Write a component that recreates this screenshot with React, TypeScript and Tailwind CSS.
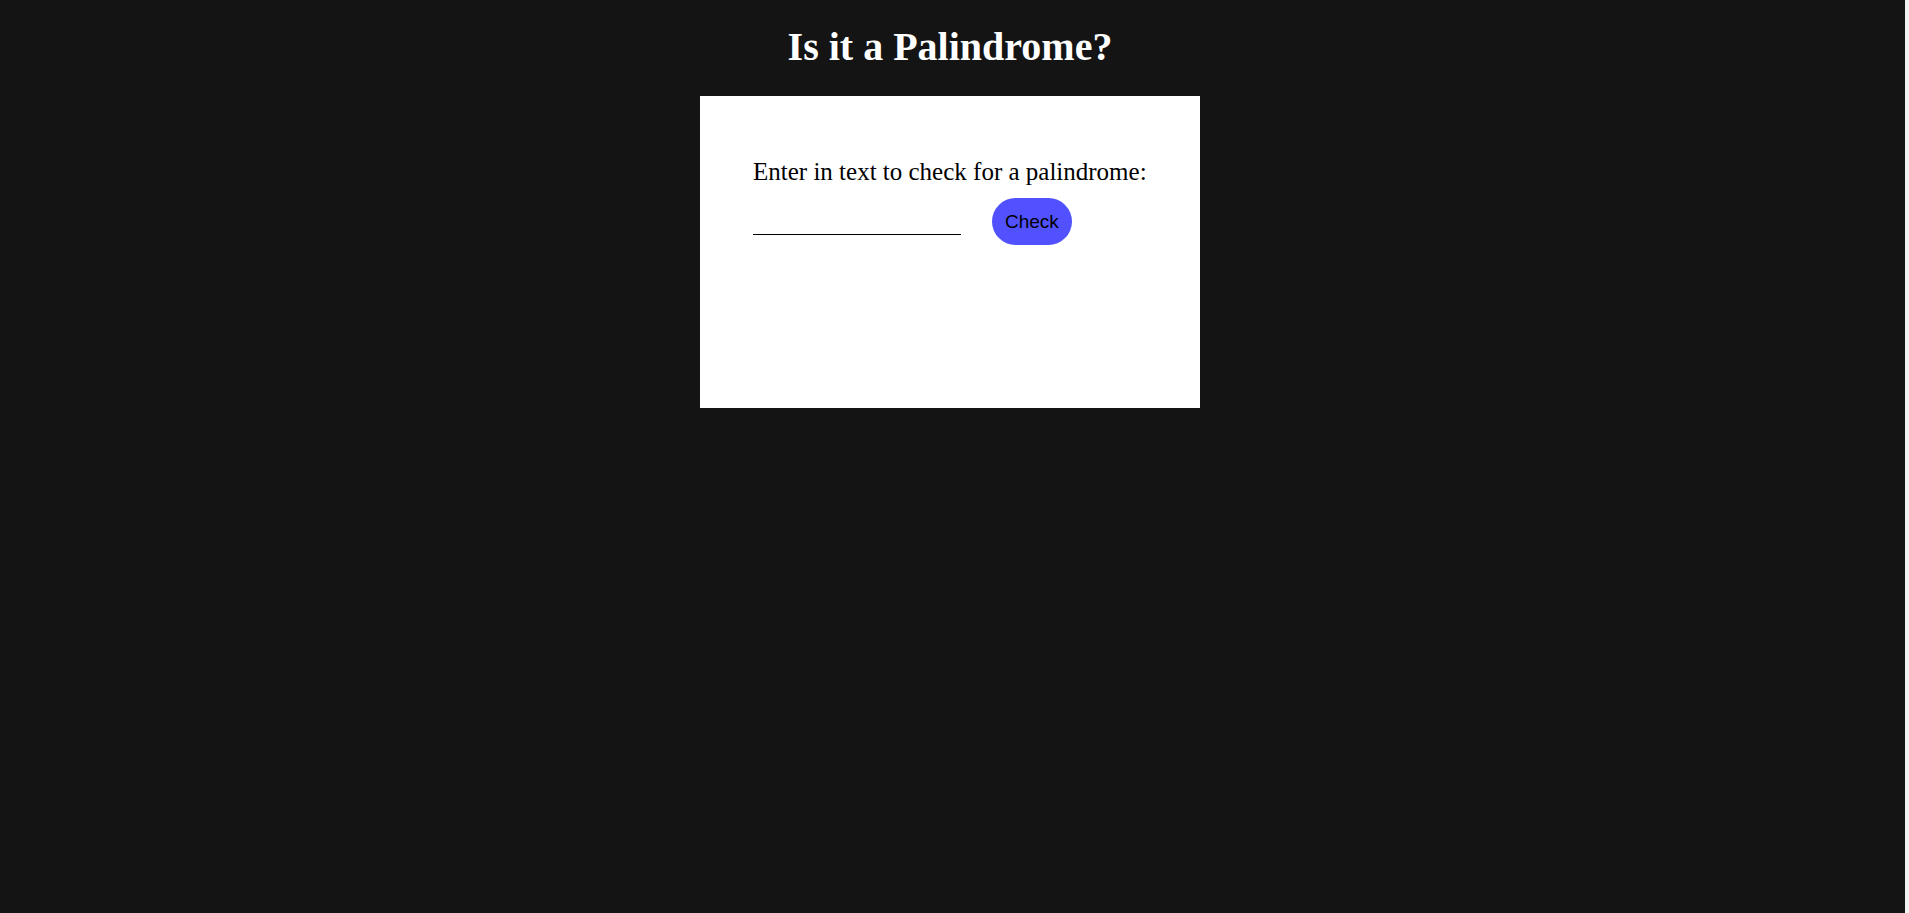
import React, { useState } from 'react';

const App: React.FC = () => {
  const [text, setText] = useState('');

  return (
    <div className="flex min-h-screen">
      <div className="flex-1 bg-[#141414] flex flex-col items-center pt-[24px] pr-[5px]">
        <h1 className="text-white font-bold text-[40px] leading-[46px] font-['Liberation_Serif',serif]">
          Is it a Palindrome?
        </h1>

        {/* Checker card */}
        <div className="mt-[26px] w-[500px] h-[312px] bg-white pl-[53px] pt-[61px]">
          <label className="block text-black text-[25px] leading-[29px] font-['Liberation_Serif',serif]">
            Enter in text to check for a palindrome:
          </label>
          <div className="flex items-center mt-[12px]">
            <input
              value={text}
              onChange={(e) => setText(e.target.value)}
              className="w-[208px] h-[27px] border-b border-black outline-none bg-transparent text-[18px] font-['Liberation_Serif',serif]"
            />
            <button className="ml-[31px] px-[13px] py-[12px] rounded-full bg-[#5151ff] text-black text-[19px] leading-[23px] font-['Liberation_Sans',sans-serif]">
              Check
            </button>
          </div>
        </div>
      </div>
      <div className="w-[4px] bg-[#f2f2f2]" />
    </div>
  );
};

export default App;
